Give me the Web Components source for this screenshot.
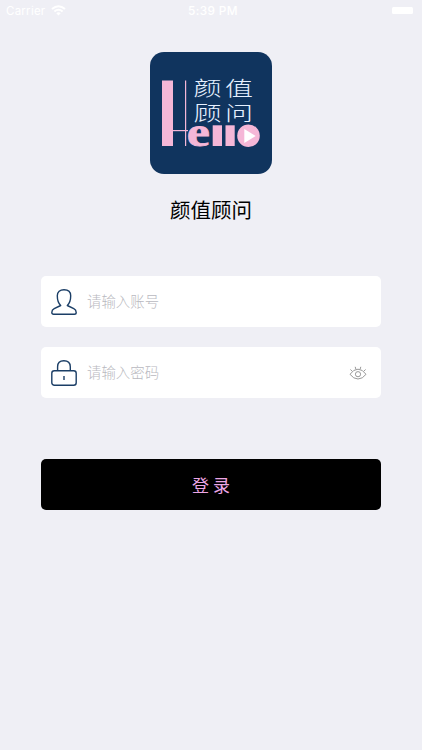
<!DOCTYPE html>
<html lang="zh-CN">
<head>
<meta charset="utf-8">
<title>颜值顾问</title>
<style>
html,body{margin:0;height:100%;background:#efeff5}
body{font-family:"Liberation Sans","Noto Sans CJK SC",sans-serif;overflow:hidden}
</style>
</head>
<body>
<login-screen></login-screen>
<script>
const define = (name, html) => customElements.define(name, class extends HTMLElement {
  constructor() {
    super();
    this.attachShadow({mode: "open"}).innerHTML = html;
  }
});

define("status-bar", `
<style>
:host{display:grid;grid-template-columns:1fr auto 1fr;align-items:center;height:22px;padding:0 9px 0 6px;box-sizing:border-box;color:#fff;font:11.5px/22px Inter,sans-serif}
.left{display:flex;align-items:center;gap:6px}
.carrier{letter-spacing:.25px}
.time{font-size:11.8px;font-weight:500;letter-spacing:.4px;padding-left:7px}
.battery{justify-self:end;width:21px;height:7px;margin-bottom:1px;border-radius:1.5px;background:#fff}
svg{display:block;margin-bottom:1px}
</style>
<div class="left"><span class="carrier">Carrier</span>
<svg width="15" height="11" viewBox="0 0 15 11" fill="none" stroke="#fff" stroke-width="2"><path d="M1 4Q7.5-1.6 14 4M3.4 6.5Q7.500 3 11.600 6.500"/><path d="M5.300 8.300Q7.500 6.400 9.700 8.300L7.500 10.600Z" fill="#fff" stroke="none"/></svg></div>
<span class="time">5:39 PM</span><span class="battery"></span>`);

define("app-logo", `
<style>:host{display:block;width:122px;height:122px;border-radius:14px;background:#10345e;overflow:hidden}svg{display:block}
.cjk{font-family:"Noto Sans CJK SC",sans-serif;font-weight:300;fill:#e6f0ff}
.latin{font-family:"Liberation Serif",serif;font-weight:700}</style>
<svg width="122" height="122" viewBox="150 52 122 122">
<g class="cjk" font-size="20.500">
<text transform="translate(193.500 96) scale(1.370 1)">颜</text><text transform="translate(225 96) scale(1.370 1)">值</text>
<text transform="translate(193.500 120.500) scale(1.370 1)">顾</text><text transform="translate(225 120.500) scale(1.370 1)">问</text></g>
<g fill="#f5b7d7"><rect x="162" y="80.500" width="11" height="65.500"/><rect x="185" y="80.500" width="1.200" height="65.500"/><rect x="173" y="130" width="15" height="1.200"/>
<text class="latin" font-size="43" stroke="#f5b7d7" stroke-width=".8" transform="translate(186.700 145.500) scale(1.210 1)">e</text>
<rect x="212.700" y="125.300" width="9.300" height="20.700"/><rect x="225.500" y="125.300" width="9.200" height="20.700"/><circle cx="248.500" cy="135.700" r="11.300"/></g>
<path d="M244.300 129V143L255.700 136Z" fill="#fff"/>
</svg>`);

define("input-row", `
<style>
:host{display:flex;align-items:center;height:51px;box-sizing:border-box;padding:0 14px 0 10px;border-radius:5px;background:#fff}
.hint{flex:1;margin:0 0 2px 10px;font:14.450px/22px "Noto Sans CJK SC",sans-serif;font-weight:300;color:#b9b9c0}
</style>
<slot name="icon"></slot><span class="hint"><slot></slot></span><slot name="action"></slot>`);

define("login-button", `
<style>:host{display:block}
button{display:block;width:100%;height:51px;border:0;padding:0;border-radius:5px;background:#000;color:#eda6e6;font:17px/51px "Noto Sans CJK SC",sans-serif}</style>
<button><slot></slot></button>`);

define("login-screen", `
<style>
:host{display:block;width:422px;height:750px;background:#efeff5}
main{display:flex;flex-direction:column;padding:30px 41px 0}
app-logo{align-self:center}
h1{margin:20px 0 0;font:20.500px/30px "Noto Sans CJK SC",sans-serif;text-align:center;color:#000}
form{display:grid;gap:20px;margin-top:52px}
login-button{margin-top:61px}
svg{display:block;fill:none}
</style>
<status-bar></status-bar>
<main>
<app-logo></app-logo>
<h1>颜值顾问</h1>
<form>
<input-row>
<svg slot="icon" width="26" height="28" viewBox="0 0 26 28" stroke="#1b3e66" stroke-width="1.400" stroke-linejoin="round"><path d="M9.700 17.500C7.200 15.200 6.300 12 6.300 7.800C6.300 3.700 9 1.700 13 1.700S19.700 3.700 19.700 7.800C19.700 12 18.800 15.200 16.300 17.500L22.800 20.600Q25.200 21.800 25.200 24.500Q25.200 26.300 23.400 26.300H2.600Q.8 26.300 .8 24.500Q.8 21.800 3.200 20.600Z"/></svg>
请输入账号</input-row>
<input-row>
<svg slot="icon" width="26" height="28" viewBox="0 0 26 28" stroke="#1b3e66" stroke-width="1.400"><rect x=".8" y="11.700" width="24.400" height="14.600" rx="2.500"/><path d="M6.600 11.500V7.800Q6.600 1.800 12.900 1.800T19.300 7.800V11.500M13 17V21"/></svg>
请输入密码
<svg slot="action" width="18" height="16" viewBox="0 0 18 16" stroke="#999" stroke-width="1"><path d="M1 9.300Q4.500 4.200 9 4.200T17 9.300Q13.500 14 9 14T1 9.300ZM6.900 4.300L6.200 1.800M11.100 4.300L11.800 1.800M3.300 6.300L1.400 4.500M14.700 6.300L16.600 4.500"/><circle cx="9" cy="9.200" r="2.600"/></svg>
</input-row>
</form>
<login-button>登 录</login-button>
</main>`);
</script>
</body>
</html>
